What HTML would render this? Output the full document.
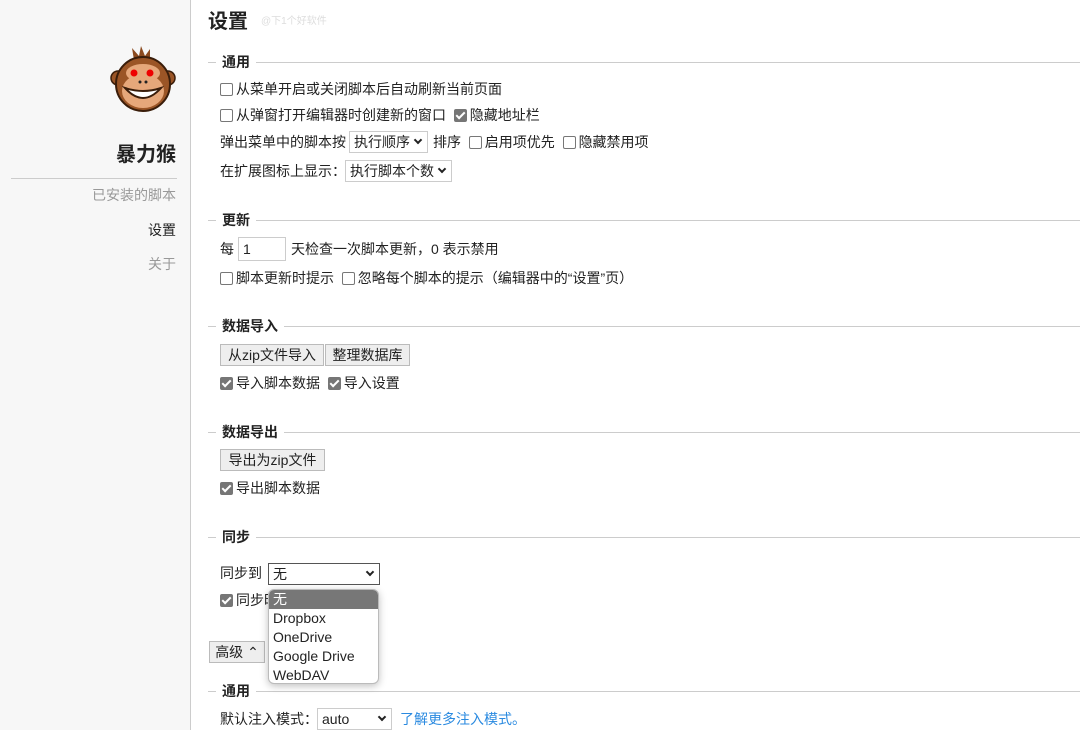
<!DOCTYPE html><html><head><meta charset="utf-8"><style>
*{box-sizing:border-box;margin:0;padding:0}
body{width:1080px;height:730px;overflow:hidden;background:#fff;font-family:"Liberation Sans","Noto Sans CJK SC",sans-serif;font-size:14px;color:#222;position:relative}
.a{position:absolute;white-space:nowrap;line-height:18px}
#side{position:absolute;left:0;top:0;width:191px;height:730px;background:#f7f7f7;border-right:1px solid #ccc}
.h{position:absolute;left:208px;right:0;height:1px;background:#ccc}
.h span{position:absolute;left:8px;top:-10px;background:#fff;padding:0 6px;font-weight:bold;font-size:14px;line-height:20px}
.cb{display:inline-block;width:13px;height:13px;border:1px solid #777;border-radius:2px;vertical-align:-2px;margin-right:3px;background:#fff;position:relative}
.cb.on{background:#767676;border-color:#767676}
.cb.on:after{content:"";position:absolute;left:3px;top:0px;width:3px;height:7px;border:solid #fff;border-width:0 2px 2px 0;transform:rotate(45deg)}
.sel{position:absolute;border:1px solid #ccc;background:#fff;height:22px;line-height:20px;padding-left:4px;white-space:nowrap}
.sel i{position:absolute;right:6px;top:5px;width:6px;height:6px;border:solid #222;border-width:0 2px 2px 0;transform:rotate(45deg)}
.btn{position:absolute;border:1px solid #bbb;background:#eee;height:22px;line-height:20px;text-align:center}
</style></head><body>
<div id="side">
<svg style="position:absolute;left:110px;top:46px" width="66" height="70" viewBox="0 0 66 70">
<path d="M24 14 L22 2 L29 10 L31 0 L35 10 L40 3 L40 14Z" fill="#8b4a1f"/>
<circle cx="8" cy="32" r="7" fill="#9b5526" stroke="#3a1d0a" stroke-width="1.5"/>
<circle cx="58" cy="32" r="7" fill="#9b5526" stroke="#3a1d0a" stroke-width="1.5"/>
<circle cx="33" cy="38" r="27" fill="#9b5526" stroke="#3a1d0a" stroke-width="2"/>
<ellipse cx="33" cy="45" rx="21" ry="17" fill="#e6a77a"/>
<ellipse cx="33" cy="27" rx="17" ry="9" fill="#e6a77a"/>
<circle cx="24" cy="27" r="3.5" fill="#e00"/><circle cx="40" cy="27" r="3.5" fill="#e00"/>
<circle cx="30" cy="36" r="1.5" fill="#222"/><circle cx="36" cy="36" r="1.5" fill="#222"/>
<path d="M15 42 Q33 62 51 42 Q33 48 15 42Z" fill="#fff" stroke="#3a1d0a" stroke-width="2"/>
</svg>
<div class="a" style="right:14px;top:143px;font-size:20px;font-weight:bold;line-height:24px">暴力猴</div>
<div style="position:absolute;left:11px;top:178px;width:166px;height:1px;background:#ccc"></div>
<div class="a" style="right:14px;top:186px;color:#999">已安装的脚本</div>
<div class="a" style="right:14px;top:221px;color:#222">设置</div>
<div class="a" style="right:14px;top:255px;color:#999">关于</div>
</div>
<div class="a" style="left:208px;top:9px;font-size:20px;font-weight:bold;line-height:26px">设置</div>
<div class="a" style="left:261px;top:13px;font-size:10px;color:#ddd">@下1个好软件</div>

<div class="h" style="top:62px"><span>通用</span></div>
<div class="a" style="left:220px;top:80px"><i class="cb"></i>从菜单开启或关闭脚本后自动刷新当前页面</div>
<div class="a" style="left:220px;top:106px"><i class="cb"></i>从弹窗打开编辑器时创建新的窗口 &nbsp;<i class="cb on"></i>隐藏地址栏</div>
<div class="a" style="left:220px;top:133px">弹出菜单中的脚本按</div>
<div class="sel" style="left:349px;top:131px;width:79px">执行顺序<i></i></div>
<div class="a" style="left:433px;top:133px">排序 &nbsp;<i class="cb"></i>启用项优先 &nbsp;<i class="cb"></i>隐藏禁用项</div>
<div class="a" style="left:220px;top:162px">在扩展图标上显示：</div>
<div class="sel" style="left:345px;top:160px;width:107px">执行脚本个数<i></i></div>

<div class="h" style="top:220px"><span>更新</span></div>
<div class="a" style="left:220px;top:240px">每</div>
<div class="sel" style="left:238px;top:237px;width:48px;height:24px;line-height:22px">1</div>
<div class="a" style="left:291px;top:240px">天检查一次脚本更新，0 表示禁用</div>
<div class="a" style="left:220px;top:269px"><i class="cb"></i>脚本更新时提示 &nbsp;<i class="cb"></i>忽略每个脚本的提示（编辑器中的“设置”页）</div>

<div class="h" style="top:326px"><span>数据导入</span></div>
<div class="btn" style="left:220px;top:344px;width:104px">从zip文件导入</div>
<div class="btn" style="left:325px;top:344px;width:85px">整理数据库</div>
<div class="a" style="left:220px;top:374px"><i class="cb on"></i>导入脚本数据 &nbsp;<i class="cb on"></i>导入设置</div>

<div class="h" style="top:432px"><span>数据导出</span></div>
<div class="btn" style="left:220px;top:449px;width:105px">导出为zip文件</div>
<div class="a" style="left:220px;top:479px"><i class="cb on"></i>导出脚本数据</div>

<div class="h" style="top:537px"><span>同步</span></div>
<div class="a" style="left:220px;top:564px">同步到</div>
<div class="sel" style="left:268px;top:563px;width:112px;height:22px;border-color:#555">无<i></i></div>
<div class="a" style="left:220px;top:591px"><i class="cb on"></i>同步时</div>
<div class="btn" style="left:209px;top:641px;width:56px">高级 ⌃</div>

<div class="h" style="top:691px"><span>通用</span></div>
<div class="a" style="left:220px;top:710px">默认注入模式：</div>
<div class="sel" style="left:317px;top:708px;width:75px">auto<i></i></div>
<div class="a" style="left:400px;top:710px;color:#2a8ae0">了解更多注入模式。</div>

<div style="position:absolute;left:268px;top:589px;width:111px;height:95px;background:#fff;border:1px solid #bbb;border-radius:6px;box-shadow:0 2px 8px rgba(0,0,0,.25);overflow:hidden;font-size:14px;line-height:19px">
<div style="background:#777;color:#fff;padding-left:4px">无</div>
<div style="padding-left:4px">Dropbox</div>
<div style="padding-left:4px">OneDrive</div>
<div style="padding-left:4px">Google Drive</div>
<div style="padding-left:4px">WebDAV</div>
</div>
</body></html>
